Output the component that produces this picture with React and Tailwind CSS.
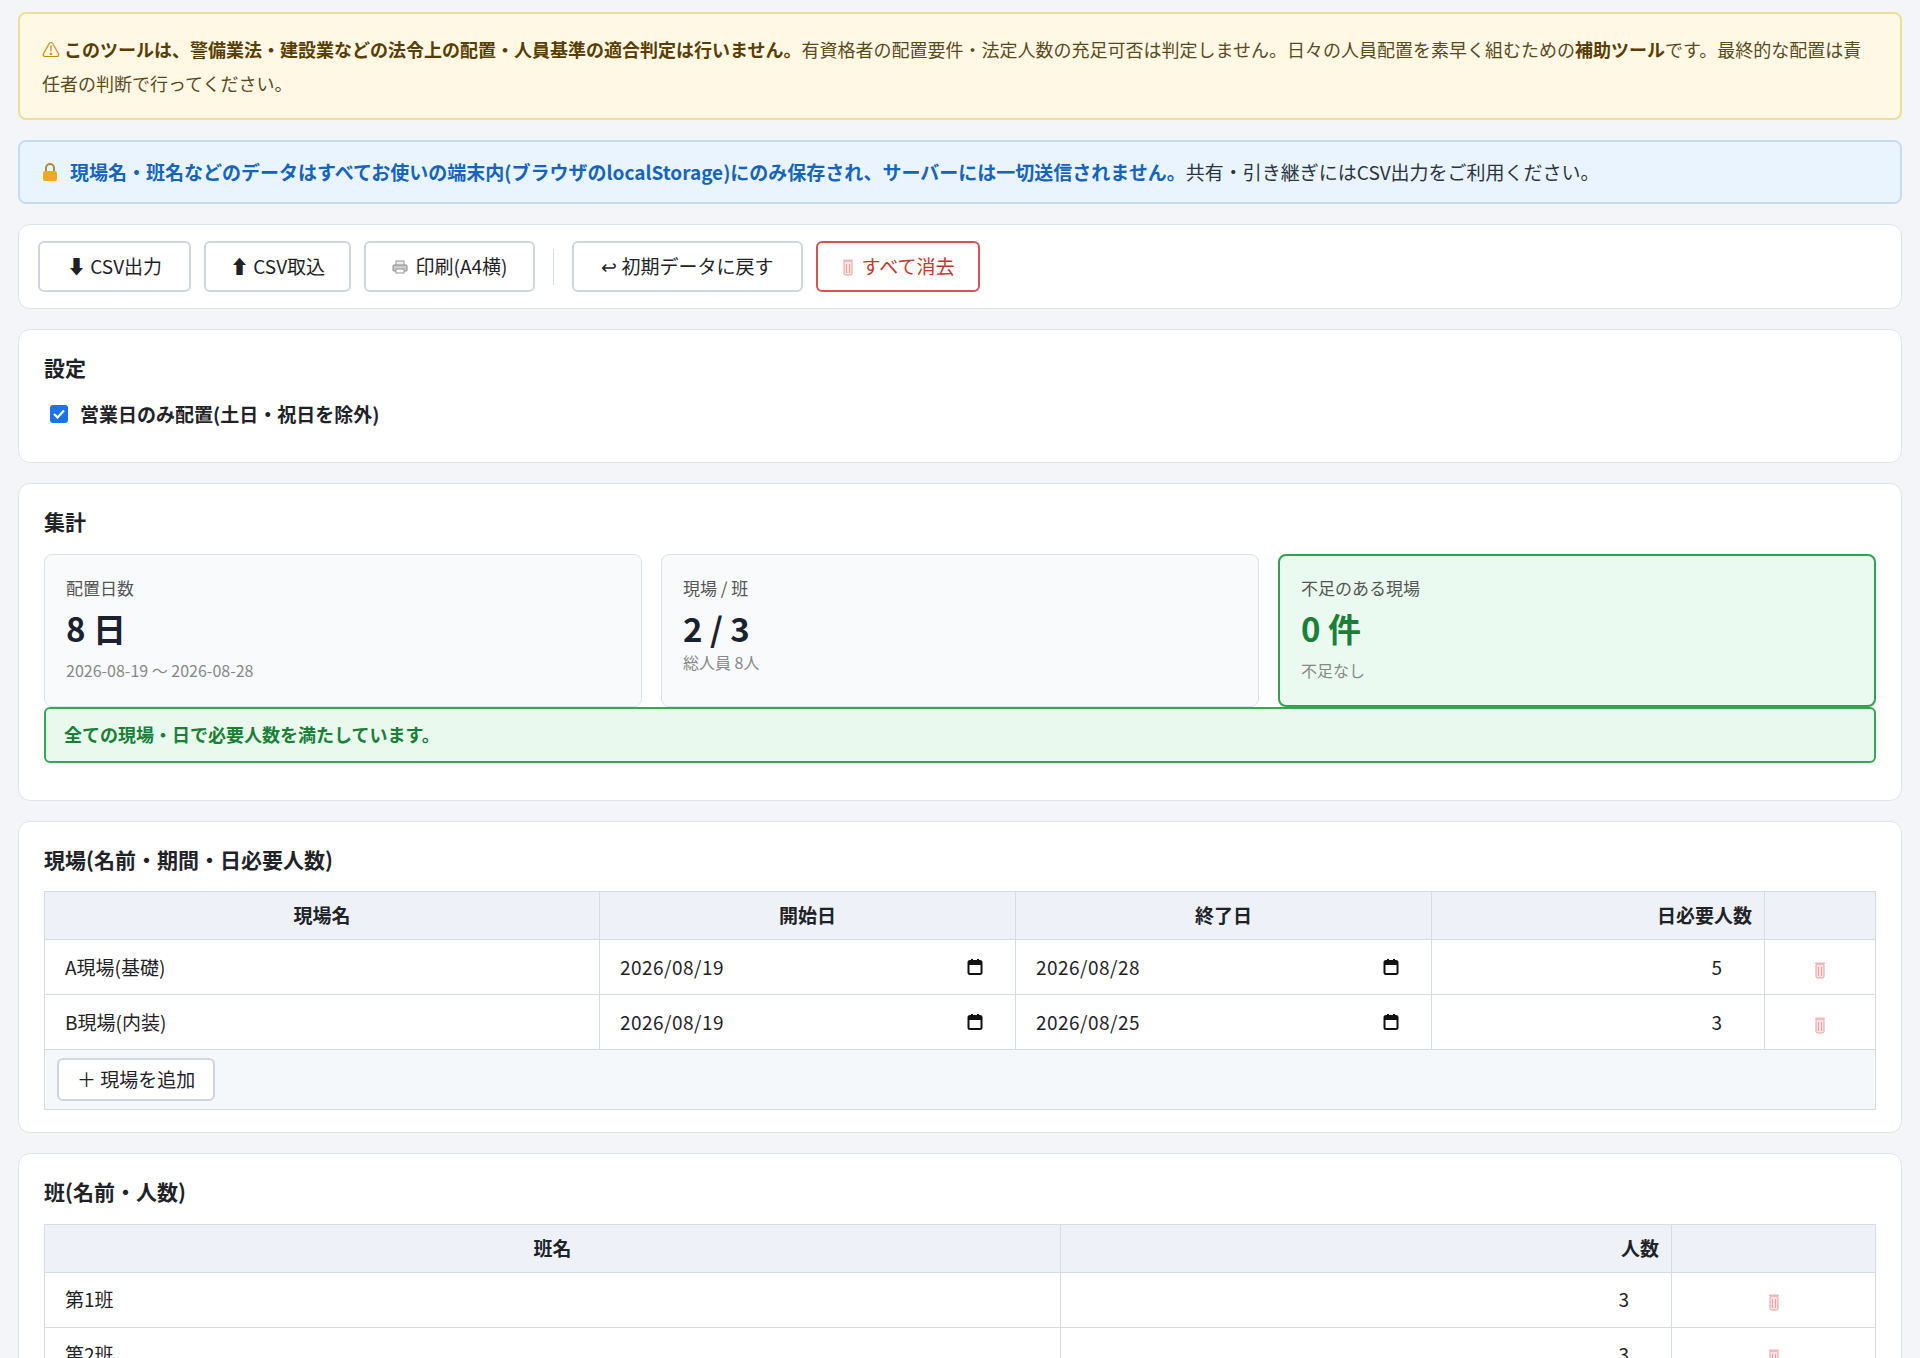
import React from "react";

const Trash = () => (
	<svg width="12" height="18" viewBox="0 0 12 18" className="inline-block">
		<rect x="2" y="3" width="8" height="14" rx="1.5" fill="#fde2e2" stroke="#e8a0a0" strokeWidth="1" />
		<rect x="1" y="1.5" width="10" height="2" rx="1" fill="#f3b5b5" />
		<line x1="4.5" y1="6" x2="4.5" y2="15" stroke="#e8a0a0" />
		<line x1="7.5" y1="6" x2="7.5" y2="15" stroke="#e8a0a0" />
	</svg>
);

const Cal = () => (
	<svg width="16" height="18" viewBox="0 0 16 18">
		<rect x="1.5" y="3" width="13" height="13" rx="1.5" fill="none" stroke="#111" strokeWidth="2" />
		<rect x="1.5" y="3" width="13" height="4" fill="#111" />
		<rect x="4" y="1" width="2" height="3" fill="#111" />
		<rect x="10" y="1" width="2" height="3" fill="#111" />
	</svg>
);

const Card = ({ title, children, className = "" }) => (
	<div className={`bg-white border border-[#dde3ea] rounded-xl px-[25px] ${className}`}>
		{title && <h2 className="text-[21px] font-bold text-[#1f2328] mb-4">{title}</h2>}
		{children}
	</div>
);

const Btn = ({ children, danger, w }) => (
	<button
		className={`h-[51px] ${w} flex items-center justify-center gap-2 rounded-md border-2 bg-white text-[19px] ${
			danger ? "border-[#d9534f] text-[#c0392b]" : "border-[#cfd6de] text-[#1f2328]"
		}`}
	>
		{children}
	</button>
);

const th = "border border-[#d5dce4] bg-[#eef2f8] font-bold text-[19px] h-[48px] px-4";
const td = "border border-[#d5dce4] bg-white text-[19px] h-[55px] px-5";

const sites = [
	["A現場(基礎)", "2026/08/19", "2026/08/28", 5],
	["B現場(内装)", "2026/08/19", "2026/08/25", 3],
];

export default function App() {
	return (
		<div
			className="min-h-screen bg-[#f3f5f9] px-[18px] pt-[12px] pb-8 flex flex-col gap-[20px] text-[#1f2328]"
			style={{ fontFamily: '"Noto Sans CJK JP", "Noto Sans", sans-serif' }}
		>
			<div className="bg-[#fef8e5] border-2 border-[#f1dc9a] rounded-lg px-[22px] py-[18px] text-[18px] leading-[34px] text-[#5b4a1e]">
				<span className="text-[#c98a00]">⚠</span>{" "}
				<b className="text-[#5a3e00]">このツールは、警備業法・建設業などの法令上の配置・人員基準の適合判定は行いません。</b>
				有資格者の配置要件・法定人数の充足可否は判定しません。日々の人員配置を素早く組むための
				<b className="text-[#5a3e00]">補助ツール</b>
				です。最終的な配置は責任者の判断で行ってください。
			</div>

			<div className="bg-[#eaf4fe] border-2 border-[#c4dcf5] rounded-lg px-[22px] h-[64px] flex items-center text-[19px] text-[#2b3440]">
				<svg width="16" height="20" viewBox="0 0 16 20" className="mr-3">
					<path d="M4 9V6a4 4 0 0 1 8 0v3" fill="none" stroke="#b08a3a" strokeWidth="2" />
					<rect x="1" y="9" width="14" height="10" rx="2" fill="#f5a623" />
				</svg>
				<b className="text-[#1565c0]">
					現場名・班名などのデータはすべてお使いの端末内(ブラウザのlocalStorage)にのみ保存され、サーバーには一切送信されません。
				</b>
				共有・引き継ぎにはCSV出力をご利用ください。
			</div>

			<div className="bg-white border border-[#dde3ea] rounded-xl px-[19px] h-[85px] flex items-center gap-[13px]">
				<Btn w="w-[153px]">⬇ CSV出力</Btn>
				<Btn w="w-[147px]">⬆ CSV取込</Btn>
				<Btn w="w-[171px]">
					<svg width="16" height="14" viewBox="0 0 16 14">
						<rect x="4" y="1" width="8" height="5" fill="#eee" stroke="#999" />
						<rect x="1" y="5" width="14" height="6" rx="1" fill="#ccc" stroke="#888" />
						<rect x="4" y="9" width="8" height="4" fill="#fff" stroke="#999" />
					</svg>
					印刷(A4横)
				</Btn>
				<div className="w-px h-[36px] bg-[#d5dce4] mx-[5px]" />
				<Btn w="w-[231px]">↩ 初期データに戻す</Btn>
				<Btn w="w-[164px]" danger>
					<Trash />
					すべて消去
				</Btn>
			</div>

			<Card title="設定" className="pt-[22px] pb-[34px]">
				<label className="flex items-center gap-3 text-[19px] font-bold ml-[6px]">
					<span className="w-[18px] h-[18px] rounded-[3px] bg-[#1a73e8] flex items-center justify-center">
						<svg width="12" height="10" viewBox="0 0 12 10">
							<path d="M1 5l3.5 3.5L11 1.5" fill="none" stroke="white" strokeWidth="2.2" />
						</svg>
					</span>
					営業日のみ配置(土日・祝日を除外)
				</label>
			</Card>

			<Card title="集計" className="pt-[22px] pb-[37px]">
				<div className="grid grid-cols-3 gap-[19px]">
					<div className="bg-[#f8fafc] border border-[#dbe2ea] rounded-lg h-[153px] px-[21px] pt-[20px]">
						<div className="text-[17px] text-[#555]">配置日数</div>
						<div className="text-[33px] font-bold text-[#1c2130] mt-[8px] leading-[40px]">8 日</div>
						<div className="text-[16px] text-[#888] mt-[10px]">2026-08-19 ～ 2026-08-28</div>
					</div>
					<div className="bg-[#f8fafc] border border-[#dbe2ea] rounded-lg h-[153px] px-[21px] pt-[20px]">
						<div className="text-[17px] text-[#555]">現場 / 班</div>
						<div className="text-[33px] font-bold text-[#1c2130] mt-[8px] leading-[40px]">2 / 3</div>
						<div className="text-[16px] text-[#888] mt-[2px]">総人員 8人</div>
					</div>
					<div className="bg-[#eafaf0] border-2 border-[#2ea44f] rounded-lg h-[153px] px-[21px] pt-[19px]">
						<div className="text-[17px] text-[#555]">不足のある現場</div>
						<div className="text-[33px] font-bold text-[#1a7f37] mt-[8px] leading-[40px]">0 件</div>
						<div className="text-[16px] text-[#888] mt-[10px]">不足なし</div>
					</div>
				</div>
				<div className="bg-[#e9f9ee] border-2 border-[#34a853] rounded-md h-[56px] flex items-center px-[18px] text-[18px] font-bold text-[#1a7f37]">
					全ての現場・日で必要人数を満たしています。
				</div>
			</Card>

			<Card title="現場(名前・期間・日必要人数)" className="pt-[22px] pb-[22px]">
				<table className="w-full border-collapse">
					<thead>
						<tr>
							<th className={`${th} w-[555px] text-center`}>現場名</th>
							<th className={`${th} w-[416px] text-center`}>開始日</th>
							<th className={`${th} w-[416px] text-center`}>終了日</th>
							<th className={`${th} w-[333px] text-right pr-3`}>日必要人数</th>
							<th className={th}></th>
						</tr>
					</thead>
					<tbody>
						{sites.map(([n, s, e, c]) => (
							<tr key={n}>
								<td className={td}>{n}</td>
								<td className={td}>
									<div className="flex items-center justify-between pr-3 tracking-wide">
										{s}
										<Cal />
									</div>
								</td>
								<td className={td}>
									<div className="flex items-center justify-between pr-3 tracking-wide">
										{e}
										<Cal />
									</div>
								</td>
								<td className={`${td} text-right pr-[42px]`}>{c}</td>
								<td className={`${td} text-center`}>
									<Trash />
								</td>
							</tr>
						))}
						<tr>
							<td colSpan={5} className="border border-[#d5dce4] bg-[#f5f8fb] h-[60px] px-[12px]">
								<button className="h-[43px] px-[18px] rounded-md border-2 border-[#cfd6de] bg-white text-[19px]">
									＋ 現場を追加
								</button>
							</td>
						</tr>
					</tbody>
				</table>
			</Card>

			<Card title="班(名前・人数)" className="pt-[22px] pb-[22px]">
				<table className="w-full border-collapse">
					<thead>
						<tr>
							<th className={`${th} w-[1016px] text-center`}>班名</th>
							<th className={`${th} w-[611px] text-right pr-3`}>人数</th>
							<th className={th}></th>
						</tr>
					</thead>
					<tbody>
						{[["第1班", 3], ["第2班", 3], ["第3班", 2]].map(([n, c]) => (
							<tr key={n}>
								<td className={`${td} h-[53px]`}>{n}</td>
								<td className={`${td} text-right pr-[42px]`}>{c}</td>
								<td className={`${td} text-center`}>
									<Trash />
								</td>
							</tr>
						))}
					</tbody>
				</table>
			</Card>
		</div>
	);
}
